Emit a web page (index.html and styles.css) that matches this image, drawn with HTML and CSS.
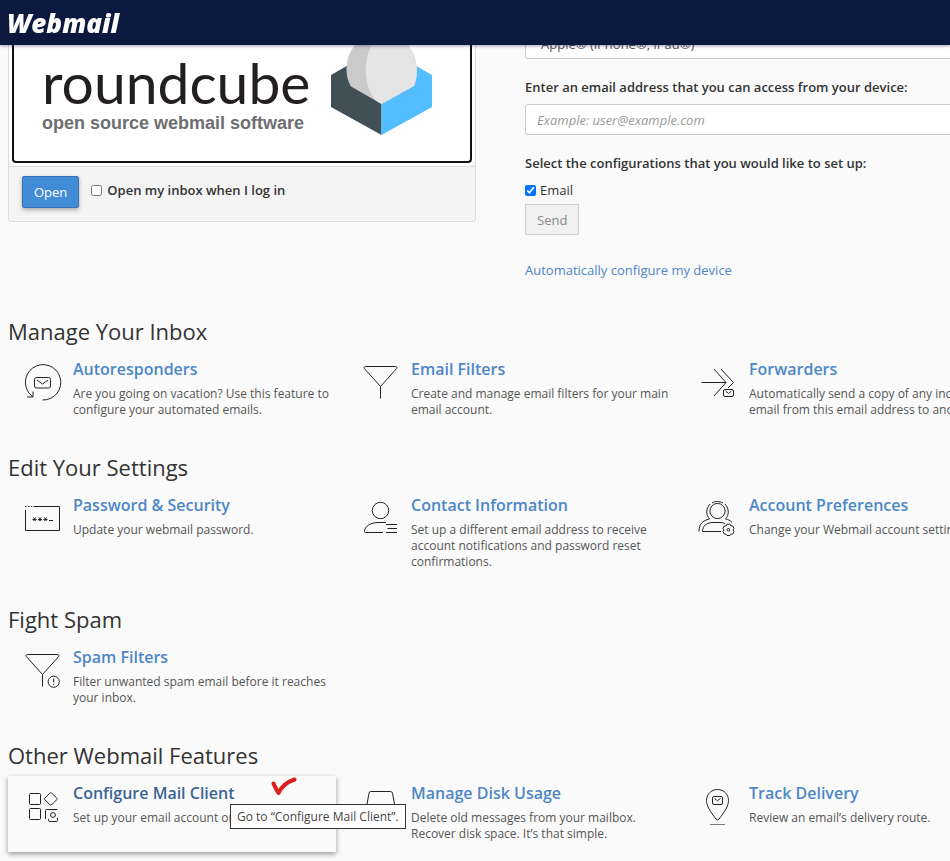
FILE: index.html
```html
<!DOCTYPE html>
<html lang="en">
<head>
<meta charset="utf-8">
<title>Webmail</title>
<link rel="stylesheet" href="styles.css">
</head>
<body>
<header class="topbar"><a class="brand" href="#">Webmail</a></header>
<main class="page">
  <div class="top">
    <section class="client">
      <div class="client-logo">
        <div class="wordmark">
          <div class="name">roundcube</div>
          <div class="tagline">open source webmail software</div>
        </div>
        <svg class="cube" viewBox="331 28 102 106" aria-hidden="true">
          <path fill="#414f56" d="M331 74l50.500-29v89L331 106z"/>
          <path fill="#52bdff" d="M432 74l-50.500-29v89L432 106z"/>
          <path fill="#cacaca" d="M351 85.500C344 74 345 56 355 44c15-18 38-18 53 0 10 12 11 30 6 41l-32.500 18z"/>
          <path fill="#e4e4e4" d="M376.500 100C363 87 363 57 372 44c4-8 9-14 18-14 8 2 13 7 18 14 10 12 11 30 6 41l-32.500 18z"/>
        </svg>
      </div>
      <div class="client-foot">
        <button class="btn primary" type="button">Open</button>
        <label class="check strong"><input type="checkbox">Open my inbox when I log in</label>
      </div>
    </section>
    <form class="setup">
      <select class="field" aria-label="Device"><option>Apple® (iPhone®, iPad®)</option></select>
      <label class="caption" for="email">Enter an email address that you can access from your device:</label>
      <input class="field" id="email" type="email" placeholder="Example: user@example.com">
      <div class="caption">Select the configurations that you would like to set up:</div>
      <label class="check option"><input type="checkbox" checked>Email</label>
      <button class="btn" type="button" disabled>Send</button>
      <a class="auto" href="#">Automatically configure my device</a>
    </form>
  </div>

  <section class="group">
    <h2>Manage Your Inbox</h2>
    <div class="items">
      <article class="item">
        <svg class="icon" viewBox="0 0 40 40" aria-hidden="true"><path d="M20.500 38A17.700 17.700 0 1 0 10.500 34.500M11 29.500v5.500H5"/><rect x="12.500" y="15.500" width="16" height="10.500" rx="2"/><path d="M15 18l5.500 4 5.500-4"/></svg>
        <div><h3><a href="#">Autoresponders</a></h3><p>Are you going on vacation? Use this feature to configure your automated emails.</p></div>
      </article>
      <article class="item">
        <svg class="icon" viewBox="0 0 40 40" aria-hidden="true"><path d="M5.500 4.500h30c1.500 0 1.800 1 1 2.200L20.500 24.500 4.500 6.700C3.700 5.500 4 4.500 5.500 4.500zM20.500 24.500v12"/></svg>
        <div><h3><a href="#">Email Filters</a></h3><p>Create and manage email filters for your main email account.</p></div>
      </article>
      <article class="item">
        <svg class="icon" viewBox="0 0 40 40" aria-hidden="true"><path d="M3.500 20.500H28M16 7l12 13.500L16 34M23 7l12.500 13.500L30 26"/><rect x="25.500" y="27.500" width="10" height="7" rx="1.500"/><path d="M27.500 29l3 2.500 3-2.500"/></svg>
        <div><h3><a href="#">Forwarders</a></h3><p>Automatically send a copy of any incoming email from this email address to another.</p></div>
      </article>
    </div>
  </section>

  <section class="group">
    <h2>Edit Your Settings</h2>
    <div class="items">
      <article class="item">
        <svg class="icon" viewBox="0 0 40 40" aria-hidden="true"><path d="M11.500 8.500h26v24h-34V12M3 8.500h1.500M6 8.500h1.500M9 8.500h1.200"/><path d="M10.500 21.500h4M11.500 19.500l2 3.500M13.500 19.500l-2 3.500M16 21.500h4M17 19.500l2 3.500M19 19.500l-2 3.500M21.500 21.500h4M22.500 19.500l2 3.500M24.500 19.500l-2 3.500M27 22.500h4"/></svg>
        <div><h3><a href="#">Password &amp; Security</a></h3><p>Update your webmail password.</p></div>
      </article>
      <article class="item">
        <svg class="icon" viewBox="0 0 40 40" aria-hidden="true"><circle cx="20.500" cy="12.500" r="8.200"/><path d="M26 24.500h-7c-9 0-14.500 4-14.500 9 0 .7.400 1 1 1H23M26 26.500h11M27.500 30.500H37M26 34.500h11"/></svg>
        <div><h3><a href="#">Contact Information</a></h3><p>Set up a different email address to receive account notifications and password reset confirmations.</p></div>
      </article>
      <article class="item">
        <svg class="icon" viewBox="0 0 40 40" aria-hidden="true"><circle cx="19.500" cy="13" r="7.600"/><path d="M12 6C7.500 11 8 17 11.500 21c-7 1.500-10.500 5-10.500 12.500M27 6c4.500 5 4 11 .5 15 3 .5 4.500 1.500 6.500 3.500M14 5c3.500-2 7.500-2 11 0M23 33.500H4.500C4.500 27.500 9 24.500 15 24.500h6c3 0 4.500.3 6 1.200"/><path d="M29 26.200h3l.8 1.600 2 .2 1.200 2.500-1 1.500 1 1.500-1.200 2.500-2 .2-.8 1.300h-3l-.8-1.300-2-.2L25 33.500l1-1.500-1-1.500 1.200-2.500 2-.2z"/><circle cx="30.500" cy="31.800" r="1.300"/></svg>
        <div><h3><a href="#">Account Preferences</a></h3><p>Change your Webmail account settings.</p></div>
      </article>
    </div>
  </section>

  <section class="group">
    <h2>Fight Spam</h2>
    <div class="items">
      <article class="item">
        <svg class="icon" viewBox="0 0 40 40" aria-hidden="true"><path d="M5.500 4.500h30c1.500 0 1.800 1 1 2.200L20.500 24.500 4.500 6.700C3.700 5.500 4 4.500 5.500 4.500zM20.500 24.500v12"/><circle cx="31.700" cy="31.700" r="5.600"/><path d="M31.700 28.500v4M31.700 33.800v1.200"/></svg>
        <div><h3><a href="#">Spam Filters</a></h3><p>Filter unwanted spam email before it reaches your inbox.</p></div>
      </article>
    </div>
  </section>

  <section class="group">
    <h2>Other Webmail Features</h2>
    <div class="items">
      <article class="item active">
        <svg class="icon" viewBox="0 0 40 40" aria-hidden="true"><rect x="7.500" y="7.500" width="11" height="11" rx="1"/><rect x="7.500" y="22.500" width="11" height="11" rx="1"/><path d="M28.200 6.800q.6-.6 1.200 0l5.500 5.500q.6.600 0 1.200l-5.500 5.500q-.6.600-1.200 0l-5.500-5.500q-.6-.6 0-1.200zM23.500 33V24.500q0-1 1-1H35.500M26.500 33v1.500q0 1 1 1h7q1 0 1-1V32"/><circle cx="31" cy="29" r="2.400"/></svg>
        <div><h3><a href="#">Configure Mail Client</a></h3><p>Set up your email account on</p></div>
        <svg class="tick" viewBox="0 0 28 20" aria-hidden="true"><path d="M3.500 6.500c1.500 3 3 6.500 5 9.500C11 10.500 17 5 24.500 2.500"/></svg>
        <div class="tip" role="tooltip">Go to “Configure Mail Client”.</div>
      </article>
      <article class="item">
        <svg class="icon" viewBox="0 0 40 40" aria-hidden="true"><path d="M6.500 21L9 7.200q.3-1.700 2-1.700h19.500q1.700 0 2 1.700L35 21M6.500 21h28.500v12h-28.500z"/></svg>
        <div><h3><a href="#">Manage Disk Usage</a></h3><p>Delete old messages from your mailbox. Recover disk space. It’s that simple.</p></div>
      </article>
      <article class="item">
        <svg class="icon" viewBox="0 0 40 40" aria-hidden="true"><path d="M19.500 3.500C13 3.500 8.500 8.500 8.500 14.500c0 5.500 4 11.500 9.500 18.500q1.500 1.800 3 0c5.500-7 9.500-13 9.500-18.500 0-6-4.500-11-11-11z"/><rect x="14.500" y="10.500" width="10" height="8" rx="1.500"/><path d="M16.500 12.500l3 2.200 3-2.200"/><path class="soft" d="M12 38.500h15"/></svg>
        <div><h3><a href="#">Track Delivery</a></h3><p>Review an email’s delivery route.</p></div>
      </article>
    </div>
  </section>
</main>
</body>
</html>
```
FILE: styles.css
```css
* { box-sizing: border-box; }
body {
  margin: 0;
  overflow: hidden;
  background: #fafafa;
  color: #333;
  font: 13px/20px "Open Sans", sans-serif;
}
a { color: #4d87c7; text-decoration: none; }
h2, h3, p { margin: 0; }

.topbar {
  position: sticky;
  top: 0;
  z-index: 5;
  display: flex;
  align-items: center;
  height: 45px;
  padding: 0 7px;
  background: #0a193d;
  box-shadow: 0 1px 3px rgba(10, 25, 61, .4);
}
.brand { color: #fff; font: italic 800 26px/44px "Open Sans", sans-serif; }

/* the content runs past the right edge and under the sticky bar */
.page { margin: -17px -62px 0 8px; }
.top {
  display: grid;
  grid-template-columns: 468fr 487fr;
  column-gap: 49px;
  align-items: start;
  margin-bottom: 36px;
}

.client {
  border: 1px solid #ddd;
  border-radius: 3px;
  background: #f4f4f4;
}
.client-logo {
  display: flex;
  justify-content: space-between;
  margin: 0 3px 3px;
  padding: 0 37px 26px 28px;
  border: 2px solid #111;
  border-top: 0;
  border-radius: 4px;
  background: #fff;
  box-shadow: 0 0 0 3px #fff;
}
.name {
  padding-top: 24px;
  color: #231f20;
  font: 57px/59px Lato, sans-serif;
}
.tagline { color: #6d6e71; font: bold 18px/23px "Liberation Sans", sans-serif; }
.cube { width: 102px; height: 106px; }
.client-foot {
  display: flex;
  gap: 12px;
  padding: 9px 13px 13px;
  border-top: 1px solid #ddd;
}

.btn {
  height: 31px;
  padding: 0 11px;
  border: 1px solid #ccc;
  background: #f1f1f1;
  color: #888;
  font: 13px/20px "Open Sans", sans-serif;
}
.btn.primary {
  height: 32px;
  border-color: #3473bc;
  border-radius: 2px;
  background: #428bd6;
  color: #fff;
  box-shadow: 0 2px 4px rgba(0, 0, 0, .3);
}
.check { display: flex; align-items: center; gap: 5px; }
.check input { width: 11px; height: 11px; margin: 0; }
.strong { height: 28px; font-weight: 600; }

.setup { display: flex; flex-direction: column; align-items: flex-start; }
.field {
  width: 100%;
  height: 31px;
  padding: 0 11px;
  border: 1px solid #ccc;
  border-radius: 3px;
  background: #fff;
  color: #555;
  font: 13px/20px "Open Sans", sans-serif;
}
.field::placeholder { color: #999; font-style: italic; }
.caption { margin: 18px 0 7px; font-weight: 600; }
.option { margin-bottom: 4px; gap: 4px; }
.auto { margin-top: 25px; }

.group { margin-bottom: 24px; }
h2 { margin-bottom: 6px; font-size: 22px; font-weight: 400; line-height: 30px; }
.items { display: grid; grid-template-columns: repeat(3, 1fr); gap: 10px; }
.item {
  position: relative;
  display: flex;
  gap: 11px;
  padding: 6px 0 10px 14px;
}
.item h3 { margin-bottom: 6px; font-size: 16px; font-weight: 600; line-height: 22px; }
.item p { color: #555; font-size: 12px; line-height: 16px; }
.icon {
  flex: none;
  width: 40px;
  height: 40px;
  margin-top: 4px;
  fill: none;
  stroke: #222;
  stroke-width: 1;
}
.soft { stroke: #777; }
.active { z-index: 1; background: #fafafa; box-shadow: 0 2px 5px rgba(0, 0, 0, .4); }
.active a { color: #3c6494; }
.tick {
  position: absolute;
  top: 1px;
  left: 262px;
  width: 28px;
  height: 20px;
  fill: none;
  stroke: #d9201f;
  stroke-width: 4;
  stroke-linecap: round;
  stroke-linejoin: round;
}
.tip {
  position: absolute;
  top: 28px;
  left: 222px;
  padding: 3px 6px;
  border: 1px solid #333;
  background: #fff;
  color: #444;
  font-size: 12px;
  line-height: 17px;
  white-space: nowrap;
}
```
